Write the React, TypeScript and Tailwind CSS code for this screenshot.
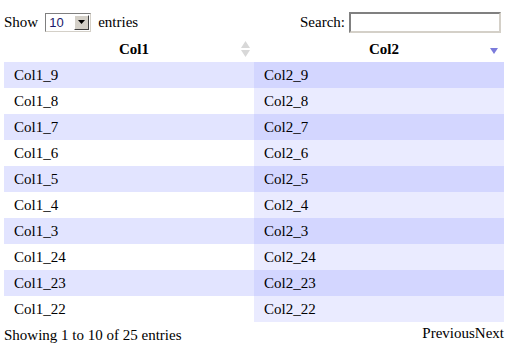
import React from "react";

const rows = ["9", "8", "7", "6", "5", "4", "3", "24", "23", "22"];

export default function App() {
  return (
    <div className="w-[511px] h-[352px] bg-white text-black text-[15px] leading-[18px] overflow-hidden font-['Liberation_Serif','Times_New_Roman',serif]">
      <div className="flex justify-between items-center pl-[4px] pr-[10px] h-[36px] pt-[8px]">
        <div className="flex items-center gap-[7px]">
          <span>Show</span>
          <div className="flex items-center w-[46px] h-[19px] border border-[#7f7f7f] border-r-[#d4d0c8] border-b-[#d4d0c8] bg-white">
            <span className="flex-1 pl-[3px] text-[13px] leading-none text-[#1a1a6a] font-['Liberation_Sans',Arial,sans-serif]">
              10
            </span>
            <div className="w-[15px] h-[15px] mr-[1px] bg-[#d4d0c8] border border-white border-r-[#404040] border-b-[#404040] flex items-center justify-center">
              <svg width="7" height="4" viewBox="0 0 7 4">
                <polygon points="0,0 7,0 3.5,4" fill="#000" />
              </svg>
            </div>
          </div>
          <span>entries</span>
        </div>
        <div className="flex items-center gap-[4px]">
          <span>Search:</span>
          <div className="w-[152px] h-[21px] border-2 border-[#808080] border-r-[#d4d0c8] border-b-[#d4d0c8] bg-white" />
        </div>
      </div>
      <div className="mx-[4px] w-[500px]">
        <div className="flex h-[26px] font-bold">
          <div className="relative w-[250px] flex items-center justify-center pl-[10px]">
            <span>Col1</span>
            <svg className="absolute left-[237px] top-[5px]" width="9" height="16" viewBox="0 0 9 16">
              <polygon points="4.5,0 9,7 0,7" fill="#d8d8d8" />
              <polygon points="0,9 9,9 4.5,16" fill="#d8d8d8" />
            </svg>
          </div>
          <div className="relative w-[250px] flex items-center justify-center pl-[10px]">
            <span>Col2</span>
            <svg className="absolute left-[236px] top-[12px]" width="8" height="6" viewBox="0 0 8 6">
              <polygon points="0,0 8,0 4,6" fill="#7b7bdb" />
            </svg>
          </div>
        </div>
        {rows.map((n, i) => {
          const odd = i % 2 === 0;
          return (
            <div key={n} className="flex h-[26px] items-center">
              <div className={`w-[250px] h-full flex items-center px-[10px] ${odd ? "bg-[#e2e4ff]" : "bg-white"}`}>
                Col1_{n}
              </div>
              <div className={`w-[250px] h-full flex items-center px-[10px] ${odd ? "bg-[#d3d6ff]" : "bg-[#eaebff]"}`}>
                Col2_{n}
              </div>
            </div>
          );
        })}
      </div>
      <div className="flex justify-between pl-[4px] pr-[7px] pt-[4px]">
        <span>Showing 1 to 10 of 25 entries</span>
        <span className="-mt-[2px]">PreviousNext</span>
      </div>
    </div>
  );
}
